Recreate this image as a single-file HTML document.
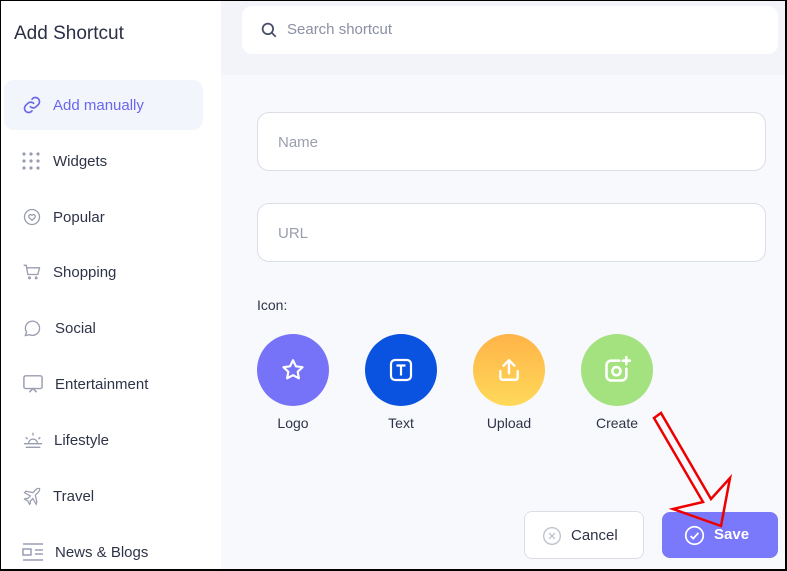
<!DOCTYPE html>
<html><head><style>
*{box-sizing:border-box;margin:0;padding:0}
html,body{width:787px;height:571px;overflow:hidden}
body{font-family:"Liberation Sans",sans-serif;background:#f8f9fd;position:relative}
.side{position:absolute;left:0;top:0;width:221px;height:571px;background:#fff}
.h{position:absolute;left:14px;top:23px;font-size:19px;color:#2b2f45}
.item{position:absolute;left:4px;width:199px;height:50px;display:flex;align-items:center;font-size:15px;color:#2f3347}
.item svg{position:absolute;left:18px}
.item span{position:absolute;left:49px}
.act{background:#f3f5fc;border-radius:10px;color:#6a66ee}
.top{position:absolute;left:221px;top:0;right:0;height:75px;background:#f3f4f9}
.search{position:absolute;left:242px;top:6px;width:536px;height:48px;background:#fff;border-radius:10px;color:#8a8fa3;font-size:15px}
.inp{position:absolute;left:257px;width:509px;height:59px;background:#fff;border:1px solid #dcdee6;border-radius:12px;color:#9a9eae;font-size:15px;padding:21px 0 0 20px}
.c{position:absolute;width:72px;height:72px;border-radius:50%;top:334px;display:flex;align-items:center;justify-content:center}
.lb{position:absolute;top:415px;width:100px;text-align:center;font-size:14px;color:#2f3347}
.frame{position:absolute;left:0;top:0;width:787px;height:571px;border:1px solid #000;border-right-width:2px;border-bottom-width:2px;pointer-events:none}
</style></head><body>
<div class="side">
<div class="h">Add Shortcut</div>
<div class="item act" style="top:80px"><svg width="20" height="20" viewBox="0 0 24 24" fill="none" stroke="#6a66ee" stroke-width="2" stroke-linecap="round"><path d="M10 14a5 5 0 0 0 7 0l3-3a5 5 0 0 0-7-7l-1 1"/><path d="M14 10a5 5 0 0 0-7 0l-3 3a5 5 0 0 0 7 7l1-1"/></svg><span>Add manually</span></div>
<div class="item" style="top:136px"><svg width="18" height="18" viewBox="0 0 18 18" fill="#9a9db0"><circle cx="2" cy="2" r="1.6"/><circle cx="9" cy="2" r="1.6"/><circle cx="16" cy="2" r="1.6"/><circle cx="2" cy="9" r="1.6"/><circle cx="9" cy="9" r="1.6"/><circle cx="16" cy="9" r="1.6"/><circle cx="2" cy="16" r="1.6"/><circle cx="9" cy="16" r="1.6"/><circle cx="16" cy="16" r="1.6"/></svg><span>Widgets</span></div>
<div class="item" style="top:192px"><svg width="20" height="20" viewBox="0 0 24 24" fill="none" stroke="#9a9db0" stroke-width="1.6"><circle cx="12" cy="12" r="9"/><path d="M12 16l-3.5-3.5a2 2 0 0 1 3.5-2.5a2 2 0 0 1 3.5 2.5z"/></svg><span>Popular</span></div>
<div class="item" style="top:247px"><svg width="20" height="20" viewBox="0 0 24 24" fill="none" stroke="#9a9db0" stroke-width="1.6"><path d="M2 4h3l2 11h12l2-8H6"/><circle cx="9" cy="19" r="1"/><circle cx="17" cy="19" r="1"/></svg><span>Shopping</span></div>
<div class="item" style="top:303px"><svg width="20" height="20" viewBox="0 0 24 24" fill="none" stroke="#9a9db0" stroke-width="1.6"><path d="M4 21l1.5-4A8.5 8.5 0 1 1 9 20z"/></svg><span style="left:51px">Social</span></div>
<div class="item" style="top:359px"><svg width="22" height="20" viewBox="0 0 24 22" fill="none" stroke="#9a9db0" stroke-width="1.6"><rect x="2" y="2" width="20" height="14" rx="2"/><path d="M8 20l4-4 4 4"/></svg><span style="left:51px">Entertainment</span></div>
<div class="item" style="top:415px"><svg width="22" height="20" viewBox="0 0 24 22" fill="none" stroke="#9a9db0" stroke-width="1.5"><path d="M2 15h20M4 19h16M7 15a5 5 0 0 1 10 0M12 3v3M4 8l2 2M20 8l-2 2"/></svg><span style="left:50px">Lifestyle</span></div>
<div class="item" style="top:471px"><svg width="20" height="20" viewBox="0 0 24 24" fill="none" stroke="#9a9db0" stroke-width="1.5"><path d="M17.8 19.2L16 11l3.5-3.5C21 6 21.5 4 21 3c-1-.5-3 0-4.5 1.5L13 8 4.8 6.2 3 8l7 4-3 3H4l-1 1 4 2 2 4 1-1v-3l3-3 4 7z"/></svg><span>Travel</span></div>
<div class="item" style="top:527px"><svg width="22" height="18" viewBox="0 0 22 18" fill="none" stroke="#9a9db0" stroke-width="1.5"><path d="M1 1h20M1 17h20M13 7h8M13 11h8"/><rect x="1" y="6" width="8" height="6"/></svg><span style="left:51px">News &amp; Blogs</span></div>
</div>
<div class="top"></div>
<div class="search"><svg style="position:absolute;left:18px;top:15px" width="18" height="18" viewBox="0 0 24 24" fill="none" stroke="#4a5068" stroke-width="2.4"><circle cx="10.5" cy="10.5" r="7"/><path d="M16 16l5 5"/></svg><span style="position:absolute;left:45px;top:15px">Search shortcut</span></div>
<div class="inp" style="top:112px">Name</div>
<div class="inp" style="top:203px">URL</div>
<div style="position:absolute;left:257px;top:297px;font-size:14px;color:#2f3347">Icon:</div>
<div class="c" style="left:257px;background:#7673f8"><svg width="26" height="26" viewBox="0 0 24 24" fill="none" stroke="#fff" stroke-width="2" stroke-linejoin="round"><path d="M12 3l2.7 5.6 6.1.8-4.5 4.2 1.1 6.1L12 16.8 6.6 19.7l1.1-6.1L3.2 9.4l6.1-.8z"/></svg></div>
<div class="c" style="left:365px;background:#0a52e0"><svg width="24" height="24" viewBox="0 0 24 24" fill="none" stroke="#fff" stroke-width="2.2"><rect x="2" y="2" width="20" height="20" rx="4"/><path d="M7.5 7.5h9M12 7.5v10"/></svg></div>
<div class="c" style="left:473px;background:linear-gradient(#ffb347,#ffd95a)"><svg width="26" height="26" viewBox="0 0 24 24" fill="none" stroke="#fff" stroke-width="2.2" stroke-linecap="round" stroke-linejoin="round"><path d="M12 15V3M7 8l5-5 5 5M4 13v6a2 2 0 0 0 2 2h12a2 2 0 0 0 2-2v-6"/></svg></div>
<div class="c" style="left:581px;background:#a3e27f"><svg width="28" height="28" viewBox="0 0 24 24" fill="none" stroke="#fff" stroke-width="2.2" stroke-linecap="round"><path d="M14 4H7a4 4 0 0 0-4 4v9a4 4 0 0 0 4 4h9a4 4 0 0 0 4-4v-6"/><circle cx="11.5" cy="13" r="3.5"/><path d="M20 1v6M17 4h6"/></svg></div>
<div class="lb" style="left:243px">Logo</div>
<div class="lb" style="left:351px">Text</div>
<div class="lb" style="left:459px">Upload</div>
<div class="lb" style="left:567px">Create</div>
<div style="position:absolute;left:524px;top:511px;width:120px;height:48px;background:#fff;border:1px solid #dcdee6;border-radius:8px;font-size:15px;color:#2f3347"><svg style="position:absolute;left:17px;top:14px" width="20" height="20" viewBox="0 0 24 24" fill="none" stroke="#bfc1cc" stroke-width="1.6"><circle cx="12" cy="12" r="10"/><path d="M8.5 8.5l7 7M15.5 8.5l-7 7"/></svg><span style="position:absolute;left:46px;top:15px">Cancel</span></div>
<div style="position:absolute;left:662px;top:512px;width:116px;height:46px;background:#7a78fb;border-radius:8px;font-size:15px;color:#fff;font-weight:bold"><svg style="position:absolute;left:22px;top:13px" width="21" height="21" viewBox="0 0 24 24" fill="none" stroke="#fff" stroke-width="2"><circle cx="12" cy="12" r="10"/><path d="M7.5 12.5l3 3 6-6.5"/></svg><span style="position:absolute;left:52px;top:14px">Save</span></div>
<svg style="position:absolute;left:0;top:0" width="787" height="571"><path d="M654 418L661 413L711 499L730 478L721 526L673 509L703 502Z" fill="none" stroke="#e00" stroke-width="2.5"/></svg>
<div class="frame"></div>
</body></html>
